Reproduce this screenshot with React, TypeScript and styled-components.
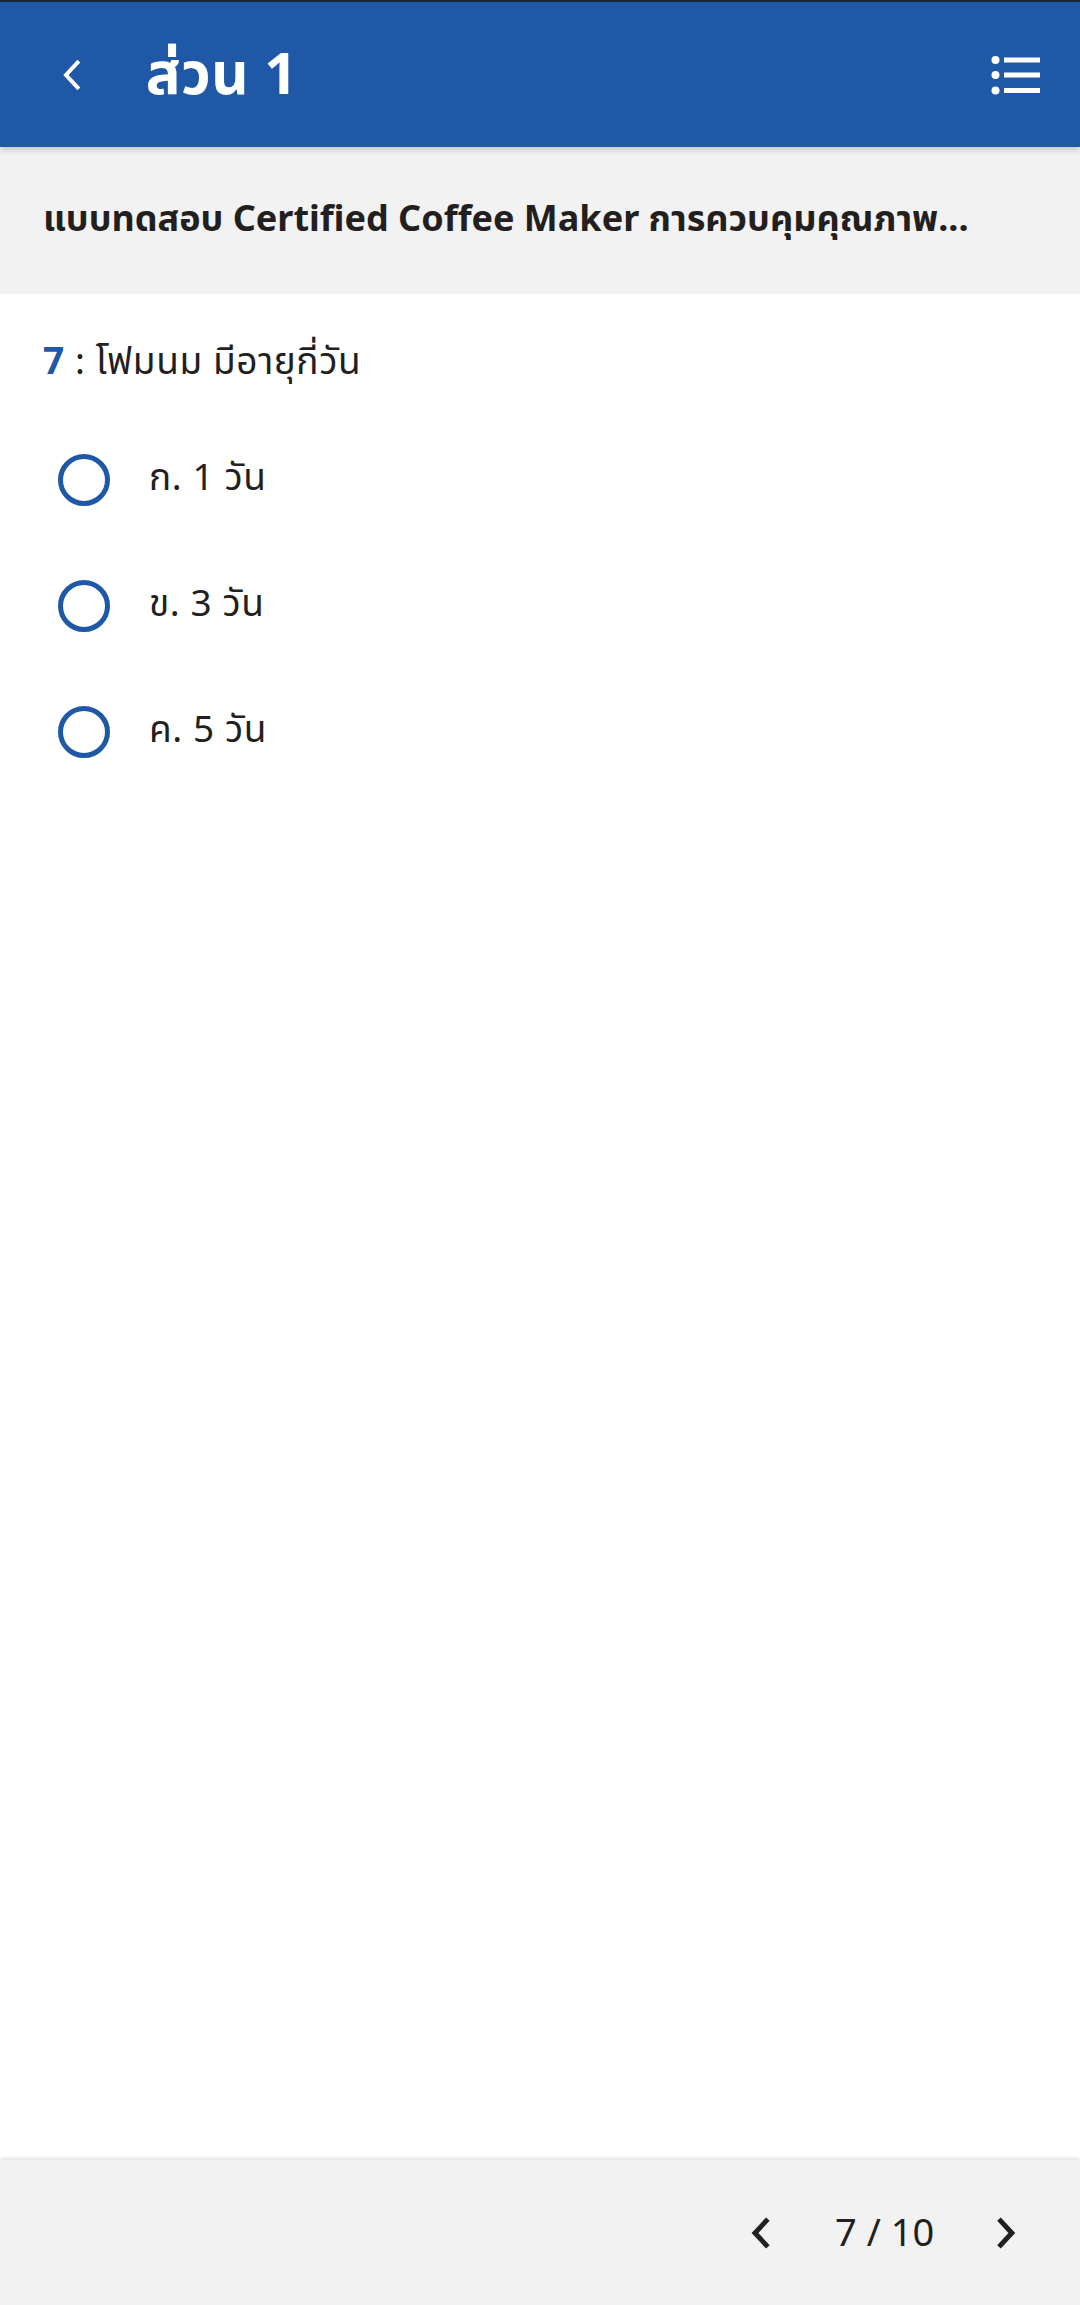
import React from "react";
import styled, { createGlobalStyle } from "styled-components";

const GlobalStyle = createGlobalStyle`
  html, body {
    margin: 0;
    padding: 0;
    background: #ffffff;
  }
  body {
    font-family: "Noto Sans", "Noto Sans Thai", "Loma", "Garuda", sans-serif;
    color: #222222;
  }
  * { box-sizing: border-box; }
`;

const Page = styled.div`
  width: 1080px;
  height: 2305px;
  display: flex;
  flex-direction: column;
  background: #ffffff;
  overflow: hidden;
`;

const Header = styled.header`
  height: 147px;
  flex: none;
  background: #1f58a6;
  border-top: 2px solid #18263b;
  display: flex;
  align-items: center;
  padding: 0 39px 0 62px;
  box-shadow: 0 3px 6px rgba(0, 0, 0, 0.18);
  position: relative;
  z-index: 2;
`;

const IconButton = styled.button`
  background: none;
  border: none;
  padding: 0;
  margin: 0;
  display: flex;
  align-items: center;
  justify-content: center;
  cursor: pointer;
`;

const HeaderTitle = styled.h1`
  margin: 0 0 0 64px;
  flex: 1;
  color: #ffffff;
  font-size: 58px;
  font-weight: 700;
  line-height: 1;
  letter-spacing: 0.3px;
  padding-bottom: 6px;
`;

const SubBar = styled.div`
  height: 147px;
  flex: none;
  background: #f2f2f2;
  display: flex;
  align-items: center;
  padding: 0 43px;
`;

const SubTitle = styled.h2`
  margin: 0;
  font-size: 36px;
  font-weight: 700;
  letter-spacing: 0;
  color: #231f20;
  white-space: nowrap;
  overflow: hidden;
  text-overflow: ellipsis;
  padding-bottom: 2px;
`;

const Content = styled.main`
  flex: 1;
  padding: 39px 43px 0;
  display: flex;
  flex-direction: column;
`;

const Question = styled.p`
  margin: 0 0 50px;
  font-size: 37px;
  letter-spacing: 0.6px;
  line-height: 54px;
  color: #231f20;
`;

const QNum = styled.span`
  color: #1f58a6;
  font-weight: 700;
`;

const OptionList = styled.div`
  display: flex;
  flex-direction: column;
  gap: 40px;
`;

const OptionRow = styled.label`
  display: flex;
  align-items: center;
  height: 86px;
  padding-left: 15px;
  cursor: pointer;
`;

const Radio = styled.span`
  width: 52px;
  height: 52px;
  border-radius: 50%;
  border: 5px solid #1f58a6;
  flex: none;
`;

const OptionText = styled.span`
  margin-left: 39px;
  font-size: 37px;
  letter-spacing: 0.6px;
  color: #231f20;
  padding-bottom: 4px;
`;

const Footer = styled.footer`
  height: 145px;
  flex: none;
  background: #f2f2f2;
  box-shadow: 0 -2px 4px rgba(0, 0, 0, 0.12);
  display: flex;
  align-items: center;
  justify-content: flex-end;
  padding-right: 64px;
`;

const Pager = styled.div`
  display: flex;
  align-items: center;
`;

const PageText = styled.span`
  font-size: 38px;
  color: #231f20;
  margin: 0 62px 0 64px;
  padding-bottom: 4px;
`;

const Chevron = ({ dir, color, size, stroke }: { dir: "left" | "right"; color: string; size: number; stroke: number }) => (
  <svg width={size * 0.62} height={size} viewBox="0 0 20 32" fill="none">
    <path
      d={dir === "left" ? "M17 2 L4 16 L17 30" : "M3 2 L16 16 L3 30"}
      stroke={color}
      strokeWidth={stroke}
      strokeLinecap="butt"
      strokeLinejoin="miter"
    />
  </svg>
);

const ListIcon = () => (
  <svg width="50" height="40" viewBox="0 0 50 40">
    <circle cx="4.5" cy="5" r="4" fill="#fff" />
    <circle cx="4.5" cy="20" r="4" fill="#fff" />
    <circle cx="4.5" cy="35.5" r="4" fill="#fff" />
    <rect x="13" y="2.5" width="36" height="5" fill="#fff" />
    <rect x="13" y="17.5" width="36" height="5" fill="#fff" />
    <rect x="13" y="33" width="36" height="5" fill="#fff" />
  </svg>
);

const options = ["ก. 1 วัน", "ข. 3 วัน", "ค. 5 วัน"];

export default function App() {
  return (
    <>
      <GlobalStyle />
      <Page>
        <Header>
          <IconButton aria-label="back">
            <Chevron dir="left" color="#ffffff" size={32} stroke={4} />
          </IconButton>
          <HeaderTitle>ส่วน 1</HeaderTitle>
          <IconButton aria-label="list">
            <ListIcon />
          </IconButton>
        </Header>
        <SubBar>
          <SubTitle>แบบทดสอบ Certified Coffee Maker การควบคุมคุณภาพ...</SubTitle>
        </SubBar>
        <Content>
          <Question>
            <QNum>7</QNum> : โฟมนม มีอายุกี่วัน
          </Question>
          <OptionList>
            {options.map((o) => (
              <OptionRow key={o}>
                <Radio />
                <OptionText>{o}</OptionText>
              </OptionRow>
            ))}
          </OptionList>
        </Content>
        <Footer>
          <Pager>
            <IconButton aria-label="previous">
              <Chevron dir="left" color="#231f20" size={32} stroke={5} />
            </IconButton>
            <PageText>7 / 10</PageText>
            <IconButton aria-label="next">
              <Chevron dir="right" color="#231f20" size={32} stroke={5} />
            </IconButton>
          </Pager>
        </Footer>
      </Page>
    </>
  );
}
